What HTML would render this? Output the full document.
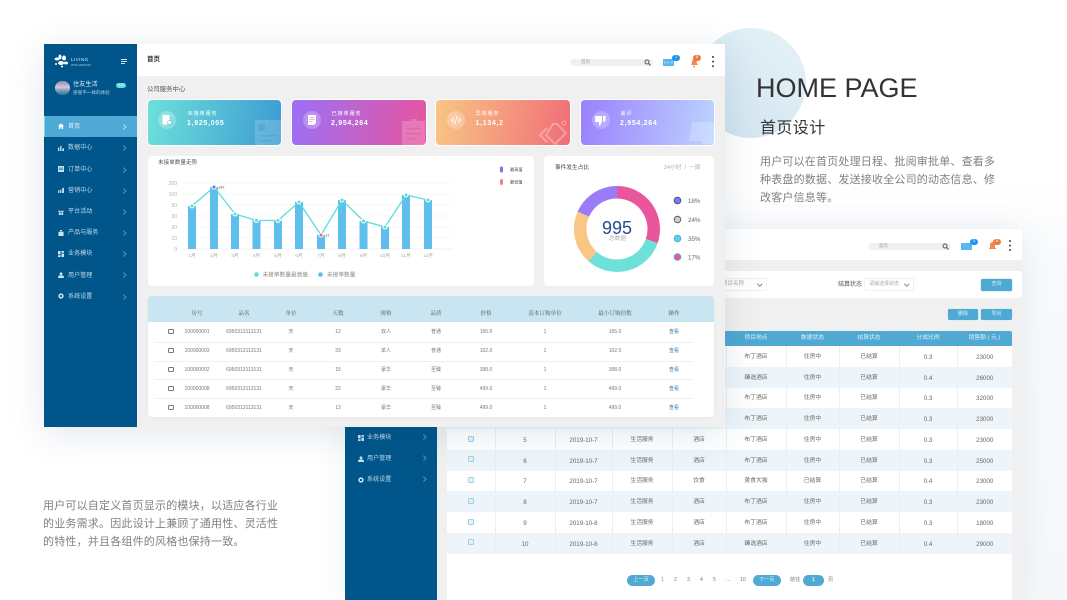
<!DOCTYPE html>
<html lang="zh">
<head>
<meta charset="utf-8">
<title>HOME PAGE</title>
<style>
*{box-sizing:border-box;margin:0;padding:0}
html,body{width:1067px;height:600px;overflow:hidden;background:#fff}
body{position:relative;font-family:"Liberation Sans","Noto Sans CJK SC",sans-serif;filter:blur(.25px)}
.a{position:absolute}
.t{position:absolute;white-space:nowrap;line-height:1}
.side{background:#00568a}
.nav{position:absolute;left:68px;color:#bfdcec;font-size:6px;line-height:1;white-space:nowrap;letter-spacing:.1px}
.chev{position:absolute;width:3.5px;height:3.5px;border-top:.6px solid #5d96b8;border-right:.6px solid #5d96b8;transform:rotate(45deg)}
.ic{position:absolute;width:6px;height:6px}
.card{position:absolute;top:100px;height:45px;border-radius:4px;overflow:hidden;box-shadow:0 0 0 1px #fff}
.circ{position:absolute;top:11px;width:18px;height:18px;border-radius:50%;background:rgba(255,255,255,.25)}
.ct{position:absolute;top:11.5px;color:#fff;font-size:5.2px;letter-spacing:.8px;line-height:1;white-space:nowrap}
.cn{position:absolute;top:20px;color:#fff;font-family:"Liberation Sans",sans-serif;font-weight:bold;font-size:7px;letter-spacing:.7px;line-height:1;white-space:nowrap}
table{border-collapse:collapse;table-layout:fixed;position:absolute}
td,th{text-align:center;padding:0;font-weight:normal;white-space:nowrap;overflow:hidden}
#ft td{height:19px;font-size:5px;color:#777;line-height:1;padding-top:1px}
#ft th{height:26px;font-size:5.6px;color:#555;padding-top:8px;font-family:"Liberation Serif","Noto Serif CJK SC",serif}
.cb{display:inline-block;width:5.5px;height:5.5px;border:.8px solid #777;border-radius:1.2px;vertical-align:middle}
.lk{color:#3a79a8 !important}
#bt td{height:20.75px;font-size:5.8px;color:#666;border-right:.5px solid #e7f0f5;line-height:1;padding-top:3px}
#bt td:first-child{padding-top:0}
#bt td:nth-child(2),#bt td:nth-child(3),#bt td:nth-child(9),#bt td:nth-child(10){font-size:6.2px}
#bt tr:nth-child(even) td{background:#edf5fa}
#bt td:last-child{border-right:0}
.bcb{display:inline-block;width:6px;height:6px;border:.8px solid #9fd0e4;border-radius:1.5px;background:#e4f2f7;vertical-align:middle}
.th{position:absolute;top:331px;height:15px;line-height:15px;color:#dff0f8;font-size:5.8px;text-align:center;white-space:nowrap}
.btn{position:absolute;background:#4fa9d3;color:#d8eef8;font-size:5px;text-align:center;border-radius:1.5px;box-shadow:0 0 0 .7px #d9ebf4}
.pg{position:absolute;top:577.5px;font-size:5.2px;line-height:1;color:#777;white-space:nowrap}
.pb{position:absolute;top:574.5px;height:11px;line-height:11px;border-radius:6px;background:#4fa9d3;color:#dff0f8;font-size:5.2px;text-align:center}
.p{position:absolute;left:760px;width:250px;color:#808080;font-size:11px;letter-spacing:.2px;line-height:18.2px}
</style>
</head>
<body>

<!-- soft page tint -->
<div class="a" style="left:725px;top:180px;width:342px;height:420px;background:linear-gradient(180deg,#fff 0,#f7f9fb 22%,#f5f7f9 100%)"></div>
<div class="a" style="left:696px;top:28px;width:110px;height:110px;border-radius:50%;background:linear-gradient(45deg,#cfe3ef,#e6f2f8)"></div>

<!-- BACK PANEL -->
<div class="a" style="left:345px;top:229px;width:677px;height:371px;background:#f0f0f0;box-shadow:0 0 28px rgba(30,70,110,.08)"></div>
<div class="a side" style="left:345px;top:229px;width:92px;height:371px"></div>
<svg class="ic" style="left:358px;top:434.5px" viewBox="0 0 7 7"><path d="M0 0h3v4H0zM4 0h3v2H4zM4 3h3v4H4zM0 5h3v2H0z" fill="#c9e3f1"/></svg>
<div class="nav" style="left:367px;top:435px">业务模块</div><div class="chev" style="left:422px;top:435px"></div>
<svg class="ic" style="left:358px;top:455.5px" viewBox="0 0 7 7"><circle cx="3.5" cy="2" r="1.6" fill="#c9e3f1"/><path d="M0 7c0-2 1-3 2-3h3c1 0 2 1 2 3z" fill="#c9e3f1"/></svg>
<div class="nav" style="left:367px;top:456px">用户管理</div><div class="chev" style="left:422px;top:456px"></div>
<svg class="ic" style="left:358px;top:476.5px" viewBox="0 0 7 7"><circle cx="3.5" cy="3.5" r="2.2" fill="none" stroke="#c9e3f1" stroke-width="1.8"/></svg>
<div class="nav" style="left:367px;top:477px">系统设置</div><div class="chev" style="left:422px;top:477px"></div>

<div class="a" style="left:437px;top:229px;width:585px;height:31px;background:#fff"></div>
<div class="a" style="left:868px;top:243px;width:83px;height:7px;border-radius:4px;background:#f0f0f0"></div>
<div class="t" style="left:879px;top:244px;font-size:4.5px;color:#999">首页</div>
<svg class="a" style="left:942px;top:243px" width="7" height="7" viewBox="0 0 7 7"><circle cx="3" cy="3" r="2" fill="none" stroke="#555" stroke-width="1"/><path d="M4.5 4.5L6.5 6.5" stroke="#555"/></svg>
<div class="a" style="left:961px;top:243px;width:11px;height:7px;background:#5bb8ee"></div>
<div class="a" style="left:970px;top:239px;width:8px;height:6px;border-radius:3px;background:#1e96f0"></div>
<div class="t" style="left:973px;top:240.300px;font-size:3.500px;color:#fff">3</div>
<svg class="a" style="left:988px;top:240px" width="12" height="12" viewBox="0 0 12 12"><path d="M2 5c0-2 1-3 2.500-3S7 3 7 5v3h1v1H1V8h1z" fill="#f58a50"/></svg>
<div class="a" style="left:993px;top:239px;width:8px;height:6px;border-radius:3px;background:#ef7a3a"></div>
<div class="t" style="left:996px;top:240.300px;font-size:3.500px;color:#fff">8</div>
<div class="a" style="left:1009px;top:240px;width:2px;height:2px;border-radius:50%;background:#444;box-shadow:0 4.500px 0 #444,0 9px 0 #444"></div>

<div class="a" style="left:437px;top:271px;width:585px;height:27px;background:#fff;border-radius:3px"></div>
<div class="a" style="left:700px;top:278px;width:67px;height:13px;border:.6px solid #f0f0f0;border-radius:2px"></div>
<div class="t" style="left:722px;top:282px;font-size:5.500px;color:#aaa">项目名称</div>
<div class="a" style="left:758px;top:282px;width:3.500px;height:3.500px;border-right:.7px solid #888;border-bottom:.7px solid #888;transform:rotate(45deg)"></div>
<div class="t" style="left:838px;top:281.500px;font-size:6px;color:#555">结算状态</div>
<div class="a" style="left:864px;top:278px;width:50px;height:13px;border:.6px solid #f0f0f0;border-radius:2px"></div>
<div class="t" style="left:869px;top:282px;font-size:5px;color:#aaa">请输选择状态</div>
<div class="a" style="left:905px;top:282px;width:3.500px;height:3.500px;border-right:.7px solid #888;border-bottom:.7px solid #888;transform:rotate(45deg)"></div>
<div class="btn" style="left:981px;top:279px;width:31px;height:11.500px;line-height:11.500px">查询</div>
<div class="btn" style="left:948px;top:308.500px;width:30px;height:11.500px;line-height:11.500px">删除</div>
<div class="btn" style="left:981px;top:308.500px;width:31px;height:11.500px;line-height:11.500px">导出</div>

<div class="a" style="left:447px;top:331px;width:565px;height:15px;background:#4fa9d3;border-radius:2px 2px 0 0"></div>
<div class="th" style="left:726px;width:60px">项目地点</div>
<div class="th" style="left:786px;width:53px">数据状态</div>
<div class="th" style="left:839px;width:60px">结算状态</div>
<div class="th" style="left:899px;width:58px">分成比例</div>
<div class="th" style="left:957px;width:55px">销售额 ( 元 )</div>
<div class="a" style="left:447px;top:346px;width:565px;height:254px;background:#fff"></div>

<table id="bt" style="left:447px;top:346px;width:565px">
<colgroup><col style="width:48px"><col style="width:60px"><col style="width:57px"><col style="width:60px"><col style="width:54px"><col style="width:60px"><col style="width:53px"><col style="width:60px"><col style="width:58px"><col style="width:55px"></colgroup>
<tr><td><span class="bcb"></span></td><td>1</td><td>2019-10-7</td><td>生活服务</td><td>酒店</td><td>布丁酒店</td><td>住房中</td><td>已结算</td><td>0.3</td><td>23000</td></tr>
<tr><td><span class="bcb"></span></td><td>2</td><td>2019-10-7</td><td>生活服务</td><td>酒店</td><td>臻选酒店</td><td>住房中</td><td>已结算</td><td>0.4</td><td>26000</td></tr>
<tr><td><span class="bcb"></span></td><td>3</td><td>2019-10-7</td><td>生活服务</td><td>酒店</td><td>布丁酒店</td><td>住房中</td><td>已结算</td><td>0.3</td><td>32000</td></tr>
<tr><td><span class="bcb"></span></td><td>4</td><td>2019-10-7</td><td>生活服务</td><td>酒店</td><td>布丁酒店</td><td>住房中</td><td>已结算</td><td>0.3</td><td>23000</td></tr>
<tr><td><span class="bcb"></span></td><td>5</td><td>2019-10-7</td><td>生活服务</td><td>酒店</td><td>布丁酒店</td><td>住房中</td><td>已结算</td><td>0.3</td><td>23000</td></tr>
<tr><td><span class="bcb"></span></td><td>6</td><td>2019-10-7</td><td>生活服务</td><td>酒店</td><td>布丁酒店</td><td>住房中</td><td>已结算</td><td>0.3</td><td>25000</td></tr>
<tr><td><span class="bcb"></span></td><td>7</td><td>2019-10-7</td><td>生活服务</td><td>饮食</td><td>美食大咖</td><td>已结算</td><td>已结算</td><td>0.4</td><td>23000</td></tr>
<tr><td><span class="bcb"></span></td><td>8</td><td>2019-10-7</td><td>生活服务</td><td>酒店</td><td>布丁酒店</td><td>住房中</td><td>已结算</td><td>0.3</td><td>23000</td></tr>
<tr><td><span class="bcb"></span></td><td>9</td><td>2019-10-8</td><td>生活服务</td><td>酒店</td><td>布丁酒店</td><td>住房中</td><td>已结算</td><td>0.3</td><td>18000</td></tr>
<tr><td><span class="bcb"></span></td><td>10</td><td>2019-10-8</td><td>生活服务</td><td>酒店</td><td>臻选酒店</td><td>住房中</td><td>已结算</td><td>0.4</td><td>29000</td></tr>
</table>

<div class="pb" style="left:627px;width:28px">上一页</div>
<div class="pg" style="left:661px;color:#4fa9d3">1</div>
<div class="pg" style="left:674px">2</div>
<div class="pg" style="left:687px">3</div>
<div class="pg" style="left:700px">4</div>
<div class="pg" style="left:713px">5</div>
<div class="pg" style="left:726px">...</div>
<div class="pg" style="left:740px">10</div>
<div class="pb" style="left:752.500px;width:28.500px">下一页</div>
<div class="pg" style="left:790px">前往</div>
<div class="pb" style="left:803px;width:21px;font-weight:bold">1</div>
<div class="pg" style="left:828px">页</div>

<!-- FRONT PANEL -->
<div class="a" style="left:44px;top:44px;width:681px;height:383px;background:#f0f0f0;box-shadow:0 6px 34px rgba(20,70,110,.13)"></div>
<div class="a side" style="left:44px;top:44px;width:93px;height:383px"></div>

<svg class="a" style="left:54px;top:54px" width="16" height="14" viewBox="0 0 16 14" fill="#fff"><ellipse cx="3" cy="5" rx="2.500" ry="1.500"/><ellipse cx="6" cy="3" rx="1.500" ry="2.500"/><ellipse cx="10" cy="4" rx="2" ry="2.500"/><ellipse cx="7" cy="9" rx="3" ry="2"/><ellipse cx="12" cy="9" rx="2" ry="1.500"/><circle cx="2" cy="10" r="1"/><circle cx="8" cy="12.500" r="1"/></svg>
<div class="t" style="left:71px;top:58.500px;font-size:4.800px;color:#d5e8f2;letter-spacing:.3px">LIVING</div>
<div class="t" style="left:71px;top:64px;font-size:2.800px;color:#a9cfe3">WITH WISDOM</div>
<div class="a" style="left:121px;top:58.500px;width:6px;height:1.200px;background:#cfe3ef;box-shadow:0 2px 0 #cfe3ef"></div>
<div class="a" style="left:121px;top:62.500px;width:4px;height:1.200px;background:#cfe3ef"></div>

<div class="a" style="left:55px;top:80.500px;width:14.500px;height:14.500px;border-radius:50%;background:linear-gradient(180deg,#8f8fb8 0,#d8c7d8 45%,#6f9ab8 70%,#3c6f95 100%)"></div>
<div class="t" style="left:73px;top:81.500px;font-size:6.200px;color:#d5e8f2">住友生活</div>
<div class="t" style="left:73px;top:90.500px;font-size:4.600px;color:#b4d5e6">感受不一样的体验</div>
<div class="a" style="left:116px;top:83px;width:10px;height:5px;border-radius:3px;background:#5fdcdc"></div>
<div class="t" style="left:118.500px;top:84px;font-size:3.500px;color:#fff">1.0</div>

<div class="a" style="left:45px;top:116px;width:92px;height:21px;background:#4ea9d6"></div>
<div class="a" style="left:44px;top:116px;width:1px;height:21px;background:#7fdede"></div>

<svg class="ic" style="left:58px;top:123px" viewBox="0 0 7 7"><path d="M3.500.5L7 3.500H6V7H4.300V5H2.700V7H1V3.500H0z" fill="#fff"/></svg>
<div class="nav" style="left:68px;top:124px;color:#e8f4fa">首页</div><div class="chev" style="left:122px;top:124.500px;border-color:#bfe0f0"></div>

<svg class="ic" style="left:58px;top:144.500px" viewBox="0 0 7 7"><path d="M0 3h1.500v4H0zM2.500 1H4v6H2.500zM5 4h2v3H5z" fill="#c9e3f1"/></svg>
<div class="nav" style="top:145px">数据中心</div><div class="chev" style="left:122px;top:146px"></div>

<svg class="ic" style="left:58px;top:166px" viewBox="0 0 7 7"><path fill="#c9e3f1" d="M0 0h7v7H0z"/><path fill="#00568a" d="M1 2h5v.7H1zM1 3.500h5v.7H1z"/></svg>
<div class="nav" style="top:166.500px">订单中心</div><div class="chev" style="left:122px;top:167.500px"></div>

<svg class="ic" style="left:58px;top:187px" viewBox="0 0 7 7"><path d="M0 4h1.500v3H0zM2.500 3H4v4H2.500zM5 1h2v6H5z" fill="#c9e3f1"/></svg>
<div class="nav" style="top:187.500px">营销中心</div><div class="chev" style="left:122px;top:188.500px"></div>

<svg class="ic" style="left:58px;top:208.500px" viewBox="0 0 7 7"><path d="M.500 2h6v1.500h-6zM1 4h5v3H1z" fill="#c9e3f1"/><path d="M3.200 1h.7v6h-.7z" fill="#00568a"/></svg>
<div class="nav" style="top:209px">平台活动</div><div class="chev" style="left:122px;top:210px"></div>

<svg class="ic" style="left:58px;top:229.500px" viewBox="0 0 7 7"><path d="M.500 2h6v5h-6zM2.300 0h2.400v1.500H2.300z" fill="#c9e3f1"/></svg>
<div class="nav" style="top:230px">产品与服务</div><div class="chev" style="left:122px;top:231px"></div>

<svg class="ic" style="left:58px;top:250.500px" viewBox="0 0 7 7"><path d="M0 0h3v4H0zM4 0h3v2H4zM4 3h3v4H4zM0 5h3v2H0z" fill="#c9e3f1"/></svg>
<div class="nav" style="top:251px">业务模块</div><div class="chev" style="left:122px;top:252px"></div>

<svg class="ic" style="left:58px;top:272px" viewBox="0 0 7 7"><circle cx="3.500" cy="2" r="1.600" fill="#c9e3f1"/><path d="M0 7c0-2 1-3 2-3h3c1 0 2 1 2 3z" fill="#c9e3f1"/></svg>
<div class="nav" style="top:272.500px">用户管理</div><div class="chev" style="left:122px;top:273px"></div>

<svg class="ic" style="left:58px;top:293px" viewBox="0 0 7 7"><circle cx="3.500" cy="3.500" r="2.200" fill="none" stroke="#c9e3f1" stroke-width="1.800"/></svg>
<div class="nav" style="top:293.500px">系统设置</div><div class="chev" style="left:122px;top:294.500px"></div>

<!-- front header -->
<div class="a" style="left:137px;top:44px;width:588px;height:32px;background:#fff"></div>
<div class="t" style="left:147px;top:56.500px;font-size:6.500px;color:#333;font-weight:bold">首页</div>
<div class="a" style="left:570px;top:58.500px;width:83px;height:7px;border-radius:4px;background:#f0f0f0"></div>
<div class="t" style="left:581px;top:59.800px;font-size:4.500px;color:#999">首页</div>
<svg class="a" style="left:644px;top:58.500px" width="7" height="7" viewBox="0 0 7 7"><circle cx="3" cy="3" r="2" fill="none" stroke="#555" stroke-width="1"/><path d="M4.500 4.500L6.500 6.500" stroke="#555"/></svg>
<div class="a" style="left:663px;top:59px;width:11px;height:7px;background:#5bb8ee"></div>
<svg class="a" style="left:663px;top:59px" width="11" height="7" viewBox="0 0 11 7"><path d="M1 2l2 1.500L1 5M10 2L8 3.500 10 5M4 3.500h3" fill="none" stroke="#d5eefc" stroke-width=".5"/></svg>
<div class="a" style="left:672px;top:55px;width:8px;height:6px;border-radius:3px;background:#1e96f0"></div>
<div class="t" style="left:675px;top:56.300px;font-size:3.500px;color:#fff">1</div>
<svg class="a" style="left:690px;top:57px" width="10" height="11" viewBox="0 0 10 11"><path d="M1.500 6.500L2.500 3c.5-1 2-1.500 3-.5l1 1 .5 3L8 8H1z" fill="#f58a50"/><circle cx="4" cy="9.500" r="1" fill="#f58a50"/></svg>
<div class="a" style="left:693px;top:55px;width:8px;height:6px;border-radius:3px;background:#ef7a3a"></div>
<div class="t" style="left:696px;top:56.300px;font-size:3.500px;color:#fff">8</div>
<div class="a" style="left:712px;top:56px;width:1.800px;height:1.800px;border-radius:50%;background:#444;box-shadow:0 4.600px 0 #444,0 9.200px 0 #444"></div>

<div class="t" style="left:147px;top:87px;font-size:6.400px;color:#555">公司服务中心</div>

<!-- cards -->
<div class="card" style="left:147.500px;width:133.500px;background:linear-gradient(100deg,#6de0da,#3d9bd3)">
  <div class="circ" style="left:10.500px"></div>
  <svg class="a" style="left:14.500px;top:15px" width="10" height="10" viewBox="0 0 10 10"><path d="M.5 0h7v6L5 9.500H.5z" fill="#fff"/><circle cx="7.500" cy="7.500" r="2" fill="#fff" stroke="#6ad" stroke-width=".5"/></svg>
  <div class="ct" style="left:40px">未接单服务</div>
  <div class="cn" style="left:39.500px">1,925,005</div>
  <svg class="a" style="left:107px;top:19px" width="27" height="26" viewBox="0 0 27 26"><path d="M0 1h27v25H0z" fill="#fff" opacity=".18"/><path d="M3 5h7v7H3zM4 16h18v1.500H4zM4 21h12v1.500H4z" fill="#3d9bd3" opacity=".4"/></svg>
</div>
<div class="card" style="left:291.500px;width:134.500px;background:linear-gradient(100deg,#9a70f6,#e8559e)">
  <div class="circ" style="left:11px"></div>
  <svg class="a" style="left:15px;top:15px" width="10" height="10" viewBox="0 0 10 10"><path d="M1 0h8v8L7 10H1z" fill="#fff"/><path d="M2.500 2.500h5M2.500 4.500h5M2.500 6.500h3" stroke="#b868d0" stroke-width=".6"/></svg>
  <div class="ct" style="left:40px">已接单服务</div>
  <div class="cn" style="left:39.500px">2,954,264</div>
  <svg class="a" style="left:110px;top:19px" width="25" height="26" viewBox="0 0 25 26"><path d="M0 2h9V0h6v2h8v24H0z" fill="#fff" opacity=".2"/><path d="M4 9h15v1.500H4zM4 14h15v1.500H4zM4 19h9v1.500H4z" fill="#e8559e" opacity=".55"/></svg>
</div>
<div class="card" style="left:436px;width:134px;background:linear-gradient(100deg,#f9c684,#f06d78)">
  <div class="circ" style="left:10.500px"></div>
  <svg class="a" style="left:15px;top:15px" width="10" height="10" viewBox="0 0 10 10"><path d="M3 2.500L.5 5 3 7.500M7 2.500L9.500 5 7 7.500M6 1L4 9" fill="none" stroke="#fff" stroke-width=".9"/></svg>
  <div class="ct" style="left:39.500px">异常服务</div>
  <div class="cn" style="left:39.500px">1,134,2</div>
  <svg class="a" style="left:103px;top:18px" width="31" height="27" viewBox="0 0 31 27"><path d="M8 10L1 17l7 7M14 6L7 17l9 9L27 15 18 6z" fill="none" stroke="#fff" stroke-width="2" opacity=".3"/><circle cx="25" cy="5" r="2" fill="none" stroke="#fff" opacity=".4"/></svg>
</div>
<div class="card" style="left:580.500px;width:133.500px;background:linear-gradient(100deg,#9a80fd,#bcd4ff)">
  <div class="circ" style="left:11px"></div>
  <svg class="a" style="left:14.500px;top:15px" width="11" height="11" viewBox="0 0 11 11"><path d="M0 1h7v6L5 10.500H4V7H0zM8 1h2.500v5.500H8z" fill="#fff"/></svg>
  <div class="ct" style="left:40px">差评</div>
  <div class="cn" style="left:39.500px">2,954,264</div>
  <svg class="a" style="left:107px;top:21px" width="27" height="24" viewBox="0 0 27 24"><path d="M4 1h23v22H14v-3H1z" fill="#fff" opacity=".22"/></svg>
</div>

<!-- chart panel -->
<div class="a" style="left:147.500px;top:156px;width:386px;height:130px;background:#fff;border-radius:4px"></div>
<div class="t" style="left:158px;top:160.500px;font-size:5.600px;color:#555">未接单数量走势</div>
<svg class="a" style="left:0;top:0" width="1067" height="600" viewBox="0 0 1067 600">
  <g stroke="#f5f5f5" stroke-width=".7">
    <path d="M183 183H452M183 194H452M183 205H452M183 216H452M183 227H452M183 238H452"/>
  </g>
  <path d="M183 249H452" stroke="#eee" stroke-width=".7"/>
  <g fill="#5fbfec">
    <rect x="188" y="206" width="8" height="43"/><rect x="210" y="187" width="8" height="62"/><rect x="231" y="214" width="8" height="35"/><rect x="252.500" y="220.500" width="8" height="28.500"/><rect x="274" y="220.500" width="8" height="28.500"/><rect x="295" y="202" width="8" height="47"/><rect x="317" y="235" width="8" height="14"/><rect x="338" y="200" width="8" height="49"/><rect x="359.500" y="221" width="8" height="28"/><rect x="381" y="227" width="8" height="22"/><rect x="402" y="195" width="8" height="54"/><rect x="424" y="200" width="8" height="49"/>
  </g>
  <path d="M192 206L214 187 235 214 256.500 220.500 278 220.500 299 202 321 235 342 200 363.500 221 385 227 406 195 428 200" fill="none" stroke="#5ddcdc" stroke-width="1.300"/>
  <g fill="#5ddcdc" stroke="#fff" stroke-width="1">
    <circle cx="192" cy="206" r="2"/><circle cx="235" cy="214" r="2"/><circle cx="256.500" cy="220.500" r="2"/><circle cx="278" cy="220.500" r="2"/><circle cx="299" cy="202" r="2"/><circle cx="342" cy="200" r="2"/><circle cx="363.500" cy="221" r="2"/><circle cx="385" cy="227" r="2"/><circle cx="406" cy="195" r="2"/><circle cx="428" cy="200" r="2"/>
  </g>
  <circle cx="214" cy="187" r="2" fill="#8d5cf6" stroke="#fff"/>
  <circle cx="321" cy="235" r="2" fill="#f0665f" stroke="#fff"/>
  <g font-family="Liberation Sans" font-size="3.800" fill="#666"><text x="218" y="188.500">189</text><text x="325" y="236.500">13</text></g>
  <g font-family="Liberation Sans" font-size="5" fill="#b0b0b0" text-anchor="end">
    <text x="177" y="185">200</text><text x="177" y="196">100</text><text x="177" y="207">50</text><text x="177" y="218">30</text><text x="177" y="229">20</text><text x="177" y="240">10</text><text x="177" y="251">0</text>
  </g>
  <g font-family="Liberation Sans,Noto Sans CJK SC,sans-serif" font-size="4.800" fill="#aaa" text-anchor="middle">
    <text x="192" y="257">1月</text><text x="214" y="257">2月</text><text x="235" y="257">3月</text><text x="256.500" y="257">4月</text><text x="278" y="257">5月</text><text x="299" y="257">6月</text><text x="321" y="257">7月</text><text x="342" y="257">8月</text><text x="363.500" y="257">9月</text><text x="385" y="257">10月</text><text x="406" y="257">11月</text><text x="428" y="257">12月</text>
  </g>
  <circle cx="256.500" cy="274.500" r="2.300" fill="#5ddcdc"/>
  <circle cx="320.500" cy="274.500" r="2.300" fill="#5fbfec"/>
  <g font-family="Liberation Sans,Noto Sans CJK SC,sans-serif" font-size="5.700" fill="#888">
    <text x="262.500" y="276.500">未接单数量最高值</text><text x="327" y="276.500">未接单数量</text>
  </g>
  <rect x="500" y="166.500" width="3" height="6" rx="1.500" fill="#8d66f6"/>
  <rect x="500" y="179" width="3" height="6" rx="1.500" fill="#f0807a"/>
  <g font-family="Liberation Sans,Noto Sans CJK SC,sans-serif" font-size="4.200" fill="#444">
    <text x="510" y="171">最高值</text><text x="510" y="183.500">最低值</text>
  </g>
</svg>

<!-- donut panel -->
<div class="a" style="left:544px;top:156px;width:170px;height:130px;background:#fff;border-radius:4px"></div>
<div class="t" style="left:555px;top:166px;font-size:5.700px;color:#444">事件发生占比</div>
<div class="t" style="left:664px;top:166px;font-size:5.600px;color:#aaa">24小时 &nbsp;/ &nbsp;一周</div>
<svg class="a" style="left:570px;top:182px" width="94" height="94" viewBox="-47 -47 94 94">
  <g fill="none" stroke-width="12.500">
    <path d="M0-36.750A36.750 36.750 0 0 1 34.700 12.100" stroke="#ea569c"/>
    <path d="M34.700 12.100A36.750 36.750 0 0 1-24.300 27.600" stroke="#6de0da"/>
    <path d="M-24.300 27.600A36.750 36.750 0 0 1-33.600-14.900" stroke="#f9c684"/>
    <path d="M-33.600-14.900A36.750 36.750 0 0 1 0-36.750" stroke="#9a7cfb"/>
  </g>
</svg>
<div class="t" style="left:602px;top:219px;font-size:18px;color:#234f8f">995</div>
<div class="t" style="left:609px;top:237px;font-size:5.600px;color:#aaa">总数据</div>
<svg class="a" style="left:0;top:0" width="1067" height="600" viewBox="0 0 1067 600">
  <circle cx="677.500" cy="200.500" r="3.300" fill="#8d70e8" stroke="#2a5a9c" stroke-width="1"/>
  <circle cx="677.500" cy="219.500" r="3.300" fill="#f9c684" stroke="#2a6aa8" stroke-width="1"/>
  <circle cx="677.500" cy="238.500" r="3.300" fill="#5fd0f0" stroke="#4fa9d3" stroke-width="1"/>
  <circle cx="677.500" cy="257" r="3.300" fill="#ea569c" stroke="#4fa9d3" stroke-width="1"/>
  <g font-family="Liberation Sans" font-size="6.200" fill="#666">
    <text x="688" y="203">18%</text><text x="688" y="222">24%</text><text x="688" y="241">35%</text><text x="688" y="259.500">17%</text>
  </g>
</svg>

<!-- front table -->
<div class="a" style="left:147.500px;top:296px;width:566.500px;height:121px;background:#fff;border-radius:4px;box-shadow:0 1px 3px rgba(0,0,0,.05)"></div>
<div class="a" style="left:147.500px;top:296px;width:566.500px;height:26px;background:#c9e5f1;border-radius:4px 4px 0 0"></div>
<table id="ft" style="left:158px;top:296px;width:550px">
<colgroup><col style="width:26px"><col style="width:26px"><col style="width:68px"><col style="width:26px"><col style="width:68px"><col style="width:28px"><col style="width:72px"><col style="width:28px"><col style="width:90px"><col style="width:50px"><col style="width:68px"></colgroup>
<tr><th></th><th>房号</th><th>品名</th><th>单位</th><th>天数</th><th>规格</th><th>品质</th><th>价格</th><th>基本订购单位</th><th>最小订购倍数</th><th>操作</th></tr>
<tr><td><span class="cb"></span></td><td>100000001</td><td>6950313113131</td><td>天</td><td>12</td><td>双人</td><td>普通</td><td>165.0</td><td>1</td><td>165.0</td><td class="lk">查看</td></tr>
<tr><td><span class="cb"></span></td><td>100000003</td><td>6950313113131</td><td>天</td><td>33</td><td>单人</td><td>普通</td><td>102.0</td><td>1</td><td>102.0</td><td class="lk">查看</td></tr>
<tr><td><span class="cb"></span></td><td>100000002</td><td>6950313113131</td><td>天</td><td>15</td><td>豪华</td><td>至臻</td><td>398.0</td><td>1</td><td>398.0</td><td class="lk">查看</td></tr>
<tr><td><span class="cb"></span></td><td>100000008</td><td>6950313113131</td><td>天</td><td>22</td><td>豪华</td><td>至臻</td><td>499.0</td><td>1</td><td>499.0</td><td class="lk">查看</td></tr>
<tr><td><span class="cb"></span></td><td>100000008</td><td>6950313113131</td><td>天</td><td>13</td><td>豪华</td><td>至臻</td><td>499.0</td><td>1</td><td>499.0</td><td class="lk">查看</td></tr>
</table>
<div class="a" style="left:154px;top:341.500px;width:539px;height:.7px;background:#f0f0f0"></div>
<div class="a" style="left:154px;top:360.500px;width:539px;height:.7px;background:#f0f0f0"></div>
<div class="a" style="left:154px;top:379px;width:539px;height:.7px;background:#f0f0f0"></div>
<div class="a" style="left:154px;top:398px;width:539px;height:.7px;background:#f0f0f0"></div>

<!-- right copy -->
<div class="t" style="left:756px;top:74.500px;font-size:27px;color:#333">HOME PAGE</div>
<div class="t" style="left:760px;top:121px;font-size:16px;letter-spacing:.4px;color:#333">首页设计</div>
<div class="p" style="top:153px">用户可以在首页处理日程、批阅审批单、查看多<br>种表盘的数据、发送接收全公司的动态信息、修<br>改客户信息等。</div>

<!-- left copy -->
<div class="p" style="left:43px;top:497px">用户可以自定义首页显示的模块&#65292;以适应各行业<br>的业务需求。因此设计上兼顾了通用性、灵活性<br>的特性&#65292;并且各组件的风格也保持一致。</div>

</body>
</html>
